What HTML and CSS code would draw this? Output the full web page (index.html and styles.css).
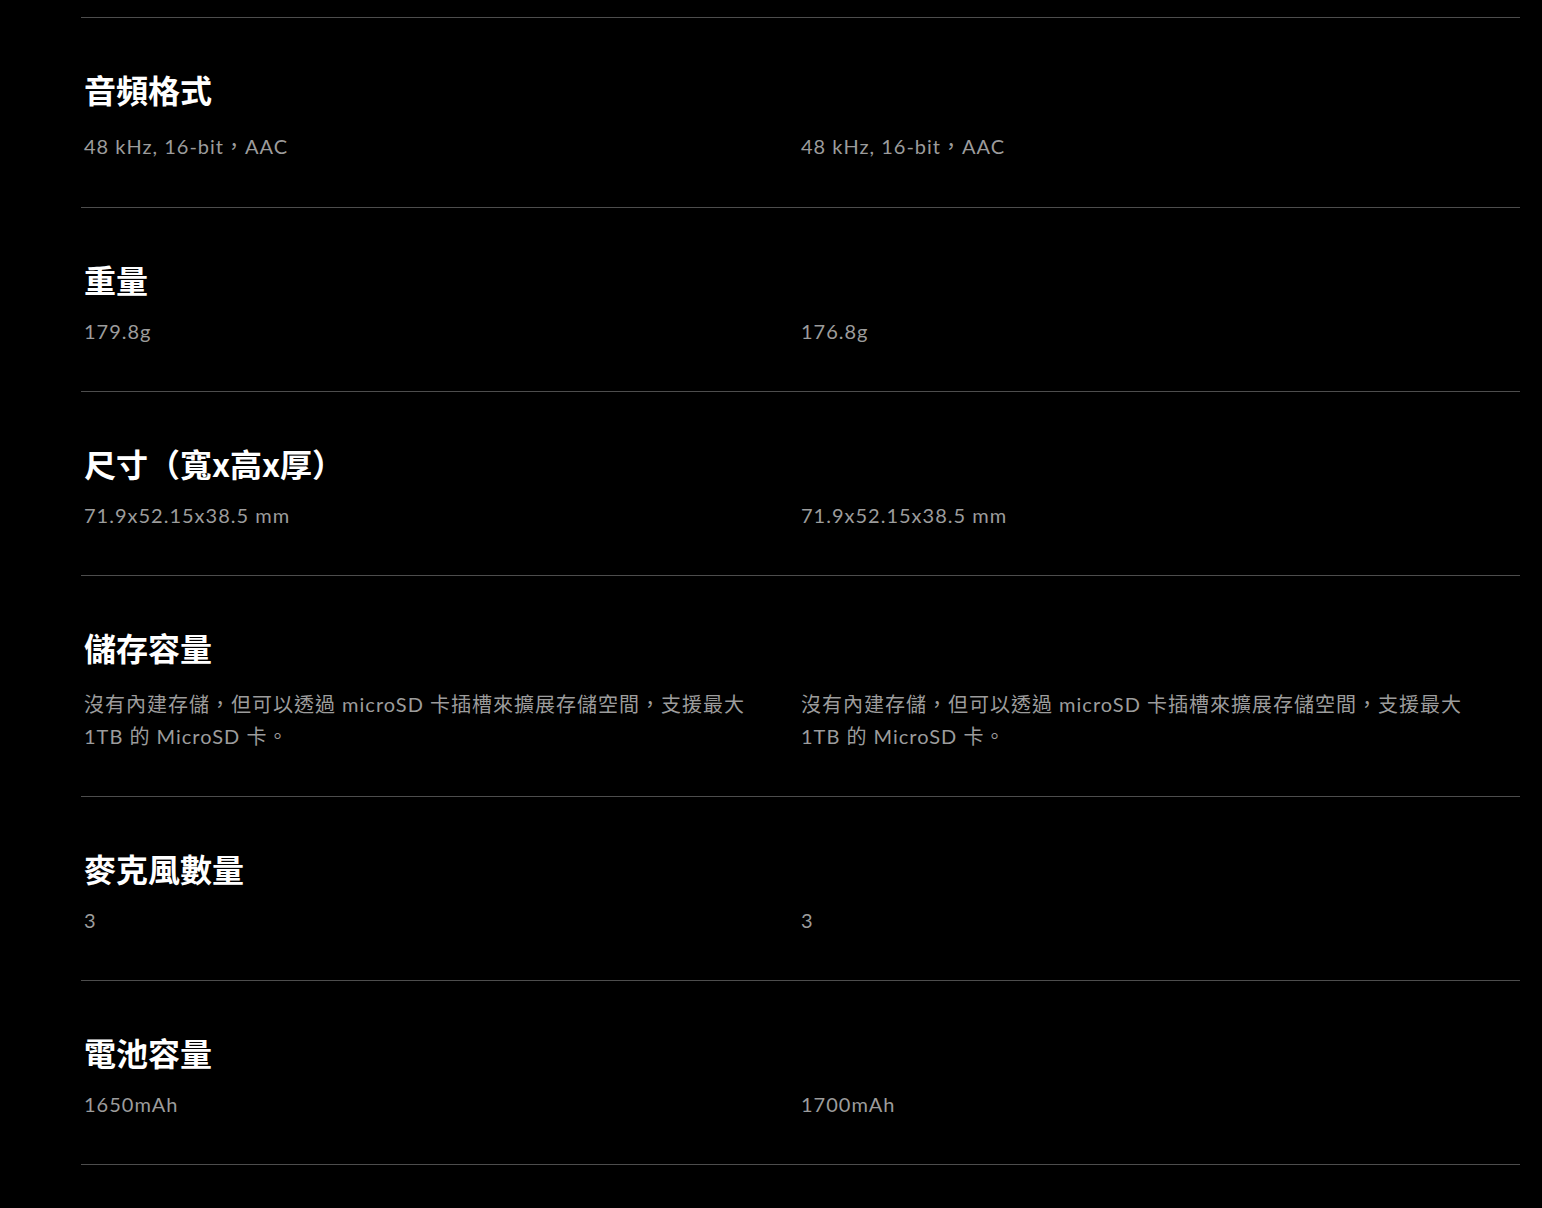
FILE: index.html
```html
<!DOCTYPE html>
<html lang="zh-Hant">
<head>
    <meta charset="UTF-8">
    <meta name="viewport" content="width=device-width, initial-scale=1.0">
    <title>規格比較</title>
    <link rel="stylesheet" href="styles.css">
</head>
<body>
    <div class="specs">
        <div class="spec-row spec-row--cjk">
            <h3>音頻格式</h3>
            <div class="spec-values">
                <p>48 kHz, 16-bit，AAC</p>
                <p>48 kHz, 16-bit，AAC</p>
            </div>
        </div>
        <div class="spec-row">
            <h3>重量</h3>
            <div class="spec-values">
                <p>179.8g</p>
                <p>176.8g</p>
            </div>
        </div>
        <div class="spec-row">
            <h3>尺寸（寬x高x厚）</h3>
            <div class="spec-values">
                <p>71.9x52.15x38.5 mm</p>
                <p>71.9x52.15x38.5 mm</p>
            </div>
        </div>
        <div class="spec-row spec-row--cjk">
            <h3>儲存容量</h3>
            <div class="spec-values">
                <p>沒有內建存儲，但可以透過 microSD 卡插槽來擴展存儲空間，支援最大 1TB 的 MicroSD 卡。</p>
                <p>沒有內建存儲，但可以透過 microSD 卡插槽來擴展存儲空間，支援最大 1TB 的 MicroSD 卡。</p>
            </div>
        </div>
        <div class="spec-row">
            <h3>麥克風數量</h3>
            <div class="spec-values">
                <p>3</p>
                <p>3</p>
            </div>
        </div>
        <div class="spec-row">
            <h3>電池容量</h3>
            <div class="spec-values">
                <p>1650mAh</p>
                <p>1700mAh</p>
            </div>
        </div>
    </div>
</body>
</html>
```

FILE: styles.css
```css
body {
    margin: 0;
    padding: 17px 22px 43px 81px;
    background-color: #000;
    color: #fff;
    font-family: Lato, "Noto Sans CJK TC", sans-serif;
}
.specs {
    border-bottom: 1px solid #4d4d4d;
}
.spec-row {
    border-top: 1px solid #4d4d4d;
    padding: 51px 3px 44px 3px;
}
.spec-row:first-child {
    padding-bottom: 45px;
}
.spec-row h3 {
    margin: 0 0 16px 0;
    font-family: "Noto Sans CJK TC", sans-serif;
    font-size: 32px;
    font-weight: 700;
    line-height: 40px;
    color: #fff;
}
.spec-row--cjk .spec-values {
    padding-top: 5px;
}
.spec-values {
    display: grid;
    grid-template-columns: 717px 1fr;
}
.spec-values p {
    margin: 0;
    padding-right: 36px;
    font-size: 20px;
    line-height: 32px;
    letter-spacing: 1px;
    color: #9c9c9c;
}
```
